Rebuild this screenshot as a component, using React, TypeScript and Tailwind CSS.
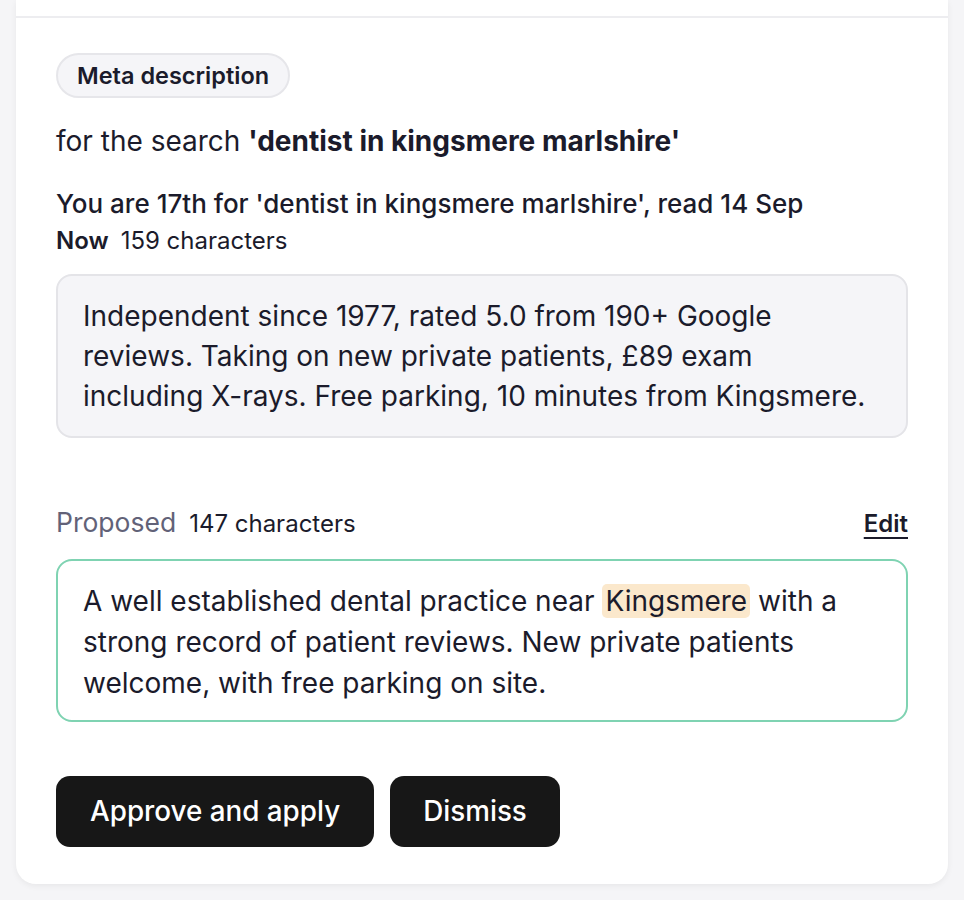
export default function App() {
  return (
    <div
      className="min-h-[900px] bg-[#f5f5f7] px-4 text-[#1b1b2b]"
      style={{ fontFamily: 'Inter, "Noto Sans", sans-serif' }}
    >
      <div className="rounded-b-[20px] bg-white shadow-[0_2px_6px_rgba(0,0,0,0.06)]">
        {/* section above, cut off */}
        <div className="h-[18px] border-b-[2px] border-[#ededf0]" />

        <div className="px-10 pt-[35px] pb-[37px]">
          <span className="inline-flex h-[45px] items-center rounded-full border-2 border-[#e6e6ea] bg-[#f5f5f8] px-[19px] text-[23.5px] font-semibold">
            Meta description
          </span>

          <p className="mt-[25px] text-[28px] leading-[36px]">
            for the search <span className="font-bold">'dentist in kingsmere marlshire'</span>
          </p>

          <p className="mt-[29px] text-[26px] font-medium leading-[32px]">
            You are 17th for 'dentist in kingsmere marlshire', read 14 Sep
          </p>
          <p className="mt-[6px] text-[24px] leading-[30px]">
            <span className="font-semibold">Now</span>
            <span className="ml-[12px]">159 characters</span>
          </p>

          <div className="mt-[18px] rounded-[16px] border-2 border-[#e4e4e8] bg-[#f5f5f8] px-[25px] py-[20px] text-[28px] leading-[40px]">
            Independent since 1977, rated 5.0 from 190+ Google
            <br />
            reviews. Taking on new private patients, £89 exam
            <br />
            including X-rays. Free parking, 10 minutes from Kingsmere.
          </div>

          <div className="mt-[68px] flex items-baseline justify-between">
            <p className="text-[24px] leading-[32px]">
              <span className="text-[26.5px] text-[#626278]">Proposed</span>
              <span className="ml-[13px]">147 characters</span>
            </p>
            <button className="text-[24px] font-semibold underline decoration-2 underline-offset-[5px]">Edit</button>
          </div>

          <div className="mt-[17px] rounded-[16px] border-2 border-[#7fd3b2] bg-white px-[25px] pt-[20px] pb-[16px] text-[28px] leading-[41px]">
            A well established dental practice near{' '}
            <span className="rounded-[5px] bg-[#fbe8cc] px-[3px]">Kingsmere</span> with a strong record of patient
            reviews. New private patients welcome, with free parking on site.
          </div>

          <div className="mt-[54px] flex gap-[16px]">
            <button className="h-[71px] rounded-[14px] bg-[#171717] px-[34px] text-[27.8px] font-medium text-white">
              Approve and apply
            </button>
            <button className="h-[71px] rounded-[14px] bg-[#171717] px-[33px] text-[27.8px] font-medium text-white">
              Dismiss
            </button>
          </div>
        </div>
      </div>
    </div>
  );
}
